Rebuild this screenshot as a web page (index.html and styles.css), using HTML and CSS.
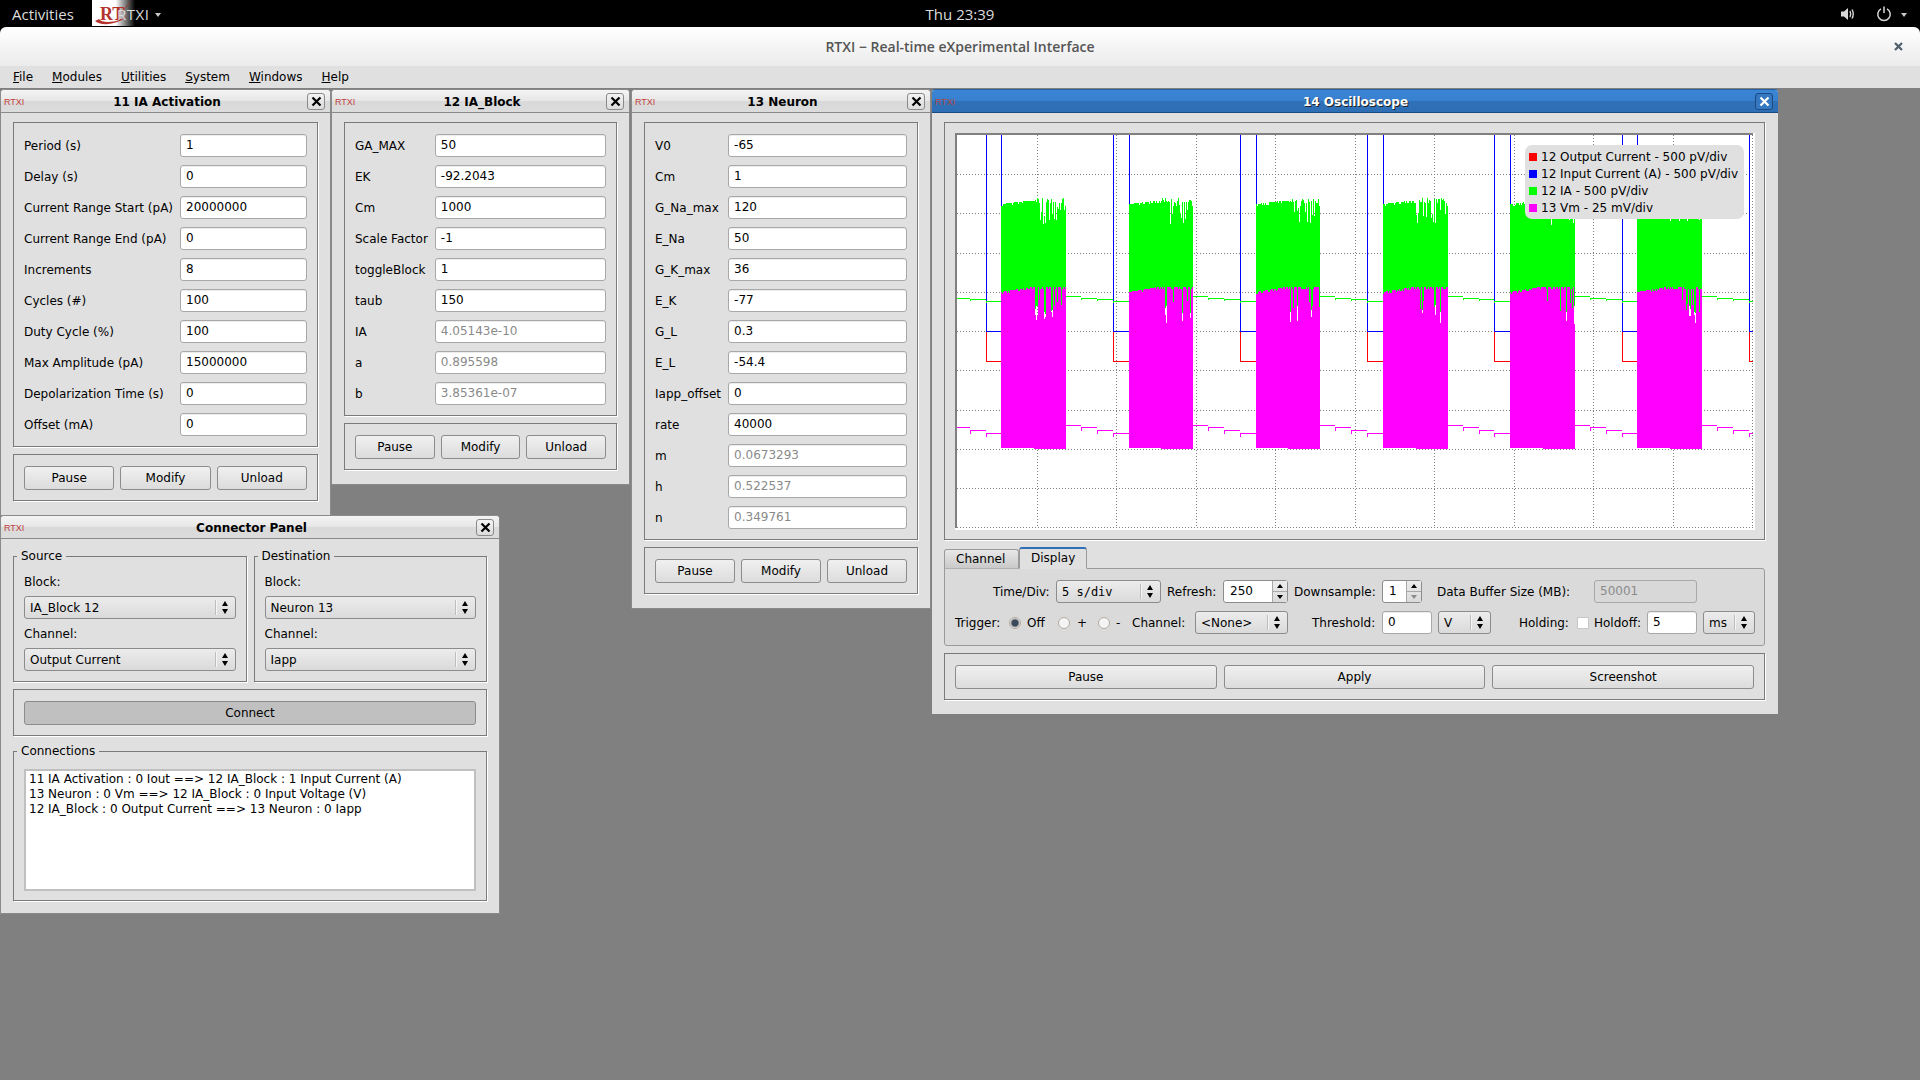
FILE: index.html
```html
<!DOCTYPE html>
<html>
<head>
	<meta charset="utf-8">
	<title>RTXI - Real-time eXperimental Interface</title>
	<link rel="stylesheet" href="styles.css">
</head>
<body>

	<div class="topbar">
		<div class="top-left">
			<span class="activities">Activities</span>
			<div class="app-logo">
				<svg width="43" height="26" viewBox="0 0 43 26">
					<path d="M3 21 C 8 26, 26 26, 38 14 C 28 23, 10 24, 7 19" fill="#b5332e"/>
					<path d="M30 12 L 38 2" stroke="#8c3a30" stroke-width="1" fill="none"/>
					<text x="8" y="20" class="logo-rt">RT</text>
				</svg>
			</div>
			<span class="app-name">RTXI</span>
			<span class="app-arrow"></span>
		</div>
		<div class="clock">Thu 23:39</div>
		<div class="top-right">
			<svg width="16" height="16" viewBox="0 0 16 16">
				<path d="M1 5.5 H4 L8 2 V14 L4 10.500 H1 Z" fill="#d8d8d8"/>
				<path d="M10 5 Q 11.500 8 10 11 M12 3.500 Q 14.500 8 12 12.500" stroke="#d8d8d8" stroke-width="1.400" fill="none"/>
			</svg>
			<svg class="power" width="16" height="16" viewBox="0 0 16 16">
				<path d="M5 2.800 A 6.200 6.200 0 1 0 11 2.800" stroke="#d8d8d8" stroke-width="1.500" fill="none"/>
				<path d="M8 0.500 V7" stroke="#d8d8d8" stroke-width="1.500"/>
			</svg>
			<span class="app-arrow"></span>
		</div>
	</div>

	<div class="title-wrap">
		<div class="titlebar">
			<span></span>
			<span class="title-text">RTXI − Real-time eXperimental Interface</span>
			<svg class="main-close" width="9" height="9" viewBox="0 0 9 9">
				<path d="M1 1 L8 8 M8 1 L1 8" stroke="#4f5f6c" stroke-width="2.200"/>
			</svg>
		</div>
	</div>

	<div class="menubar">
		<span><u>F</u>ile</span>
		<span><u>M</u>odules</span>
		<span><u>U</u>tilities</span>
		<span><u>S</u>ystem</span>
		<span><u>W</u>indows</span>
		<span><u>H</u>elp</span>
	</div>

	<div class="desktop">

		<!-- 11 IA Activation -->
		<div class="win win-activation">
			<div class="win-title">
				<span class="win-icon">RTXI</span>
				<span class="win-name">11 IA Activation</span>
				<span class="win-close"><svg width="11" height="11" viewBox="0 0 11 11"><path d="M1.500 1.500 L9.500 9.500 M9.500 1.500 L1.500 9.500" stroke="#000" stroke-width="2.200"/></svg></span>
			</div>
			<div class="win-body">
				<div class="group form">
					<label>Period (s)</label><div class="field">1</div>
					<label>Delay (s)</label><div class="field">0</div>
					<label>Current Range Start (pA)</label><div class="field">20000000</div>
					<label>Current Range End (pA)</label><div class="field">0</div>
					<label>Increments</label><div class="field">8</div>
					<label>Cycles (#)</label><div class="field">100</div>
					<label>Duty Cycle (%)</label><div class="field">100</div>
					<label>Max Amplitude (pA)</label><div class="field">15000000</div>
					<label>Depolarization Time (s)</label><div class="field">0</div>
					<label>Offset (mA)</label><div class="field">0</div>
				</div>
				<div class="group btn-row">
					<button>Pause</button><button>Modify</button><button>Unload</button>
				</div>
			</div>
		</div>

		<!-- 12 IA_Block -->
		<div class="win win-block">
			<div class="win-title">
				<span class="win-icon">RTXI</span>
				<span class="win-name">12 IA_Block</span>
				<span class="win-close"><svg width="11" height="11" viewBox="0 0 11 11"><path d="M1.500 1.500 L9.500 9.500 M9.500 1.500 L1.500 9.500" stroke="#000" stroke-width="2.200"/></svg></span>
			</div>
			<div class="win-body">
				<div class="group form">
					<label>GA_MAX</label><div class="field">50</div>
					<label>EK</label><div class="field">-92.2043</div>
					<label>Cm</label><div class="field">1000</div>
					<label>Scale Factor</label><div class="field">-1</div>
					<label>toggleBlock</label><div class="field">1</div>
					<label>taub</label><div class="field">150</div>
					<label>IA</label><div class="field readonly">4.05143e-10</div>
					<label>a</label><div class="field readonly">0.895598</div>
					<label>b</label><div class="field readonly">3.85361e-07</div>
				</div>
				<div class="group btn-row">
					<button>Pause</button><button>Modify</button><button>Unload</button>
				</div>
			</div>
		</div>

		<!-- 13 Neuron -->
		<div class="win win-neuron">
			<div class="win-title">
				<span class="win-icon">RTXI</span>
				<span class="win-name">13 Neuron</span>
				<span class="win-close"><svg width="11" height="11" viewBox="0 0 11 11"><path d="M1.500 1.500 L9.500 9.500 M9.500 1.500 L1.500 9.500" stroke="#000" stroke-width="2.200"/></svg></span>
			</div>
			<div class="win-body">
				<div class="group form">
					<label>V0</label><div class="field">-65</div>
					<label>Cm</label><div class="field">1</div>
					<label>G_Na_max</label><div class="field">120</div>
					<label>E_Na</label><div class="field">50</div>
					<label>G_K_max</label><div class="field">36</div>
					<label>E_K</label><div class="field">-77</div>
					<label>G_L</label><div class="field">0.3</div>
					<label>E_L</label><div class="field">-54.4</div>
					<label>Iapp_offset</label><div class="field">0</div>
					<label>rate</label><div class="field">40000</div>
					<label>m</label><div class="field readonly">0.0673293</div>
					<label>h</label><div class="field readonly">0.522537</div>
					<label>n</label><div class="field readonly">0.349761</div>
				</div>
				<div class="group btn-row">
					<button>Pause</button><button>Modify</button><button>Unload</button>
				</div>
			</div>
		</div>

		<!-- Connector Panel -->
		<div class="win win-connector">
			<div class="win-title">
				<span class="win-icon">RTXI</span>
				<span class="win-name">Connector Panel</span>
				<span class="win-close"><svg width="11" height="11" viewBox="0 0 11 11"><path d="M1.500 1.500 L9.500 9.500 M9.500 1.500 L1.500 9.500" stroke="#000" stroke-width="2.200"/></svg></span>
			</div>
			<div class="win-body connector-body">
				<div class="source-dest">
					<fieldset class="fgroup">
						<legend>Source</legend>
						<div class="lb-line">Block:</div>
						<div class="combo"><span>IA_Block 12</span><i class="updown"></i></div>
						<div class="lb-line">Channel:</div>
						<div class="combo"><span>Output Current</span><i class="updown"></i></div>
					</fieldset>
					<fieldset class="fgroup">
						<legend>Destination</legend>
						<div class="lb-line">Block:</div>
						<div class="combo"><span>Neuron 13</span><i class="updown"></i></div>
						<div class="lb-line">Channel:</div>
						<div class="combo"><span>Iapp</span><i class="updown"></i></div>
					</fieldset>
				</div>
				<div class="group btn-row">
					<button class="pressed">Connect</button>
				</div>
				<fieldset class="fgroup conn-group">
					<legend>Connections</legend>
					<div class="conn-list">
						<div>11 IA Activation : 0 Iout ==&gt; 12 IA_Block : 1 Input Current (A)</div>
						<div>13 Neuron : 0 Vm ==&gt; 12 IA_Block : 0 Input Voltage (V)</div>
						<div>12 IA_Block : 0 Output Current ==&gt; 13 Neuron : 0 Iapp</div>
					</div>
				</fieldset>
			</div>
		</div>

		<!-- 14 Oscilloscope -->
		<div class="win win-scope">
			<div class="win-title">
				<span class="win-icon">RTXI</span>
				<span class="win-name">14 Oscilloscope</span>
				<span class="win-close"><svg width="11" height="11" viewBox="0 0 11 11"><path d="M1.500 1.500 L9.500 9.500 M9.500 1.500 L1.500 9.500" stroke="#fff" stroke-width="2.200"/></svg></span>
			</div>
			<div class="win-body">
				<div class="group plot-group">
					<div class="plot">
						<canvas id="scope" width="800" height="397"></canvas>
						<div class="plot-legend">
							<div><i class="sw-red"></i>12 Output Current - 500 pV/div</div>
							<div><i class="sw-blue"></i>12 Input Current (A) - 500 pV/div</div>
							<div><i class="sw-green"></i>12 IA - 500 pV/div</div>
							<div><i class="sw-magenta"></i>13 Vm - 25 mV/div</div>
						</div>
					</div>
				</div>

				<div class="tabs-wrap">
					<div class="tabs">
						<div class="tab">Channel</div>
						<div class="tab active">Display</div>
					</div>
					<div class="tab-pane">
						<div class="ctl-row">
							<span class="lb ml38 w56">Time/Div:</span>
							<div class="combo mono ml7 w105"><span>5 s/div</span><i class="updown"></i></div>
							<span class="lb ml6 w49">Refresh:</span>
							<div class="spin ml7 w65"><span class="spin-val">250</span><span class="spin-btns"><i class="arrow-up"></i><i class="arrow-down"></i></span></div>
							<span class="lb ml6 w81">Downsample:</span>
							<div class="spin ml7 w40"><span class="spin-val">1</span><span class="spin-btns"><i class="arrow-up"></i><i class="arrow-down dim"></i></span></div>
							<span class="lb ml15 w131">Data Buffer Size (MB):</span>
							<div class="field disabled ml26 w103">50001</div>
						</div>
						<div class="ctl-row">
							<span class="lb w45">Trigger:</span>
							<i class="radio checked ml9"></i>
							<span class="lb ml6 w18">Off</span>
							<i class="radio ml13"></i>
							<span class="lb ml7 w8">+</span>
							<i class="radio ml13"></i>
							<span class="lb ml6 w4">-</span>
							<span class="lb ml12 w53">Channel:</span>
							<div class="combo ml10 w93"><span>&lt;None&gt;</span><i class="updown"></i></div>
							<span class="lb ml24 w63">Threshold:</span>
							<div class="field ml7 w50">0</div>
							<div class="combo ml6 w53"><span>V</span><i class="updown"></i></div>
							<span class="lb ml28 w49">Holding:</span>
							<i class="check ml9"></i>
							<span class="lb ml5 w46">Holdoff:</span>
							<div class="field ml7 w50">5</div>
							<div class="combo ml6 w52"><span>ms</span><i class="updown"></i></div>
						</div>
					</div>
				</div>

				<div class="group btn-row scope-btns">
					<button>Pause</button><button>Apply</button><button>Screenshot</button>
				</div>
			</div>
		</div>

	</div>

	<script src="plot.js"></script>
</body>
</html>
```

FILE: styles.css
```css
* {
	box-sizing: border-box;
}

html, body {
	margin: 0;
	height: 100%;
}

body {
	display: flex;
	flex-direction: column;
	width: 1920px;
	height: 1080px;
	overflow: hidden;
	background: #808080;
	font-family: "DejaVu Sans", sans-serif;
	font-size: 12px;
	color: #000;
}

/* gnome shell bar */

.topbar {
	display: grid;
	grid-template-columns: 1fr auto 1fr;
	align-items: center;
	height: 27px;
	flex: none;
	background: #000;
	color: #dcdcdc;
	font-family: "Open Sans", sans-serif;
	font-size: 15px;
}

.top-left {
	display: flex;
	align-items: center;
	height: 27px;
}

.activities {
	margin-left: 12px;
	width: 80px;
}

.app-logo {
	width: 43px;
	height: 26px;
	align-self: flex-start;
	background: linear-gradient(90deg, #fff 55%, #000 100%);
}

.logo-rt {
	font-family: "Liberation Serif", serif;
	font-weight: bold;
	font-size: 18px;
	fill: #b5332e;
}

.app-name {
	margin-left: -18px;
	letter-spacing: 0.500px;
	position: relative;
}

.app-arrow {
	width: 0;
	height: 0;
	margin-left: 6px;
	margin-top: 3px;
	border-left: 3.500px solid transparent;
	border-right: 3.500px solid transparent;
	border-top: 4px solid #c8c8c8;
}

.top-right {
	display: flex;
	align-items: center;
	justify-content: flex-end;
	padding-right: 13px;
}

.top-right .power {
	margin-left: 20px;
}

.top-right .app-arrow {
	margin-left: 9px;
}

/* main window */

.title-wrap {
	flex: none;
	background: #000;
}

.titlebar {
	display: grid;
	grid-template-columns: 1fr auto 1fr;
	align-items: center;
	height: 39px;
	border-radius: 6px 6px 0 0;
	background: linear-gradient(#fff, #ebebeb);
	color: #555;
	font-family: "Open Sans", sans-serif;
	font-size: 14px;
	font-weight: 600;
}

.main-close {
	justify-self: end;
	margin-right: 17px;
}

.menubar {
	display: flex;
	flex: none;
	gap: 19px;
	align-items: center;
	height: 22px;
	padding-left: 13px;
	background: #e0e0e0;
}

.desktop {
	position: relative;
	flex: 1;
	background: #808080;
}

/* module windows */

.win {
	position: absolute;
	top: 1px;
	background: #e0e0e0;
	border: 1px solid #8a8a8a;
	border-radius: 4px 4px 0 0;
}

.win-activation {
	left: 0;
	width: 331px;
}

.win-block {
	left: 331px;
	width: 299px;
}

.win-neuron {
	left: 631px;
	width: 300px;
}

.win-connector {
	left: 0;
	top: 427px;
	width: 500px;
}

.win-scope {
	left: 931px;
	width: 848px;
	border-color: #808080;
	border-top-color: #2a5f9e;
}

.win-title {
	display: grid;
	grid-template-columns: 1fr auto 1fr;
	align-items: center;
	height: 23px;
	padding: 1px 5px 0 8px;
	background: linear-gradient(#f4f4f4, #e6e6e6 50%, #d9d9d9 52%, #dcdcdc);
	border-bottom: 1px solid #8a8a8a;
	border-radius: 3px 3px 0 0;
}

.win-icon {
	margin-left: -5px;
	font-family: "Liberation Sans", sans-serif;
	font-size: 9px;
	color: #c0403a;
}

.win-name {
	font-weight: bold;
}

.win-close {
	display: flex;
	align-items: center;
	justify-content: center;
	justify-self: end;
	width: 18px;
	height: 17px;
	margin-top: -1px;
	border: 1px solid #8a8a8a;
	border-radius: 3px;
	background: linear-gradient(#f2f2f2, #dcdcdc);
}

.win-scope .win-title {
	background: linear-gradient(#3b85d6, #3680cf 50%, #2f71b8 52%, #2e6eb4);
	border-bottom-color: #1c4a80;
}

.win-scope .win-name {
	margin-left: -2px;
	color: #fff;
	text-shadow: 1px 1px 0 #222;
}

.win-scope .win-icon {
	color: #b5433c;
}

.win-scope .win-close {
	border-color: #1c4a80;
	background: #3478c2;
}

.win-scope .win-body {
	padding-right: 13px;
}

.win-body {
	display: flex;
	flex-direction: column;
	gap: 7px;
	padding: 9px 12px 14px 12px;
}

.group {
	border: 1px solid #7a7a7a;
	box-shadow: 1px 1px 0 #fff;
}

.form {
	display: grid;
	grid-template-columns: auto 1fr;
	column-gap: 7px;
	row-gap: 8px;
	align-items: center;
	padding: 11px 10px 10px 10px;
}

.form label {
	white-space: nowrap;
}

.field {
	height: 23px;
	line-height: 21px;
	padding-left: 5px;
	background: #fff;
	border: 1px solid #a8a8a8;
	border-radius: 3px;
	box-shadow: inset 0 1px 0 #ececec;
}

.field.readonly {
	color: #8a8a8a;
}

.field.disabled {
	background: #d8d8d8;
	color: #8a8a8a;
	box-shadow: none;
}

.btn-row {
	display: flex;
	gap: 6px;
	padding: 11px 10px 10px 10px;
}

.btn-row button {
	flex: 1;
	height: 24px;
	padding: 0;
	font-family: inherit;
	font-size: 12px;
	color: #000;
	background: linear-gradient(#f0f0f0, #dcdcdc);
	border: 1px solid #8c8c8c;
	border-radius: 3px;
}

.btn-row button.pressed {
	background: #c0c0c0;
}

.scope-btns {
	gap: 7px;
}

/* connector panel */

.connector-body {
	padding-bottom: 12px;
}

.source-dest {
	display: grid;
	grid-template-columns: 1fr 1fr;
	gap: 7px;
}

.fgroup {
	display: flex;
	flex-direction: column;
	gap: 7px;
	min-width: 0;
	margin: 0;
	padding: 11px 10px 10px 10px;
	border: 1px solid #7a7a7a;
	box-shadow: 1px 1px 0 #fff;
}

.fgroup legend {
	margin-left: -7px;
	margin-bottom: -1px;
	padding: 1px 4px 0 4px;
	line-height: 15px;
}

.conn-group {
	padding-bottom: 9px;
}

.lb-line {
	height: 15px;
	line-height: 17px;
}

.combo {
	display: flex;
	align-items: center;
	justify-content: space-between;
	height: 23px;
	padding-left: 5px;
	background: linear-gradient(#ececec, #dadada);
	border: 1px solid #8c8c8c;
	border-radius: 3px;
}

.combo.mono {
	font-family: "DejaVu Sans Mono", monospace;
}

.updown {
	position: relative;
	flex: none;
	width: 20px;
	height: 15px;
	border-left: 1px solid #bdbdbd;
	box-shadow: inset 1px 0 0 #f5f5f5;
}

.updown::before, .updown::after {
	content: "";
	position: absolute;
	left: 6px;
	border-left: 3.500px solid transparent;
	border-right: 3.500px solid transparent;
}

.updown::before {
	top: 1px;
	border-bottom: 5px solid #000;
}

.updown::after {
	bottom: 1px;
	border-top: 5px solid #000;
}

.conn-list {
	height: 122px;
	padding: 1px 3px 0 3px;
	line-height: 15px;
	background: #fff;
	border: 2px solid #c0c0c0;
}

/* oscilloscope */

.plot-group {
	padding: 10px 9px 9px 10px;
}

.plot {
	position: relative;
	width: 800px;
	height: 397px;
}

.plot canvas {
	display: block;
}

.plot-legend {
	position: absolute;
	left: 570px;
	top: 12px;
	width: 219px;
	height: 74px;
	padding: 4px 0 0 4px;
	background: #e0e0e0;
	border-radius: 7px;
	line-height: 17px;
	white-space: nowrap;
}

.plot-legend i {
	display: inline-block;
	width: 8px;
	height: 8px;
	margin-right: 4px;
}

.sw-red { background: #f00; }
.sw-blue { background: #00f; }
.sw-green { background: #0f0; }
.sw-magenta { background: #f0f; }

.tabs {
	display: flex;
	align-items: flex-end;
	height: 22px;
	margin-bottom: -1px;
	position: relative;
	z-index: 1;
}

.tab {
	width: 75px;
	height: 20px;
	padding-left: 11px;
	line-height: 19px;
	background: linear-gradient(#e8e8e8, #c9c9c9);
	border: 1px solid #9a9a9a;
	border-bottom: 1px solid #b0b0b0;
	border-radius: 3px 3px 0 0;
}

.tab.active {
	width: 68px;
	height: 22px;
	margin-left: 0;
	padding-top: 0;
	line-height: 19px;
	background: #e0e0e0;
	border-top: 2px solid #2f6fb5;
	border-bottom-color: #e0e0e0;
}

.tab-pane {
	display: flex;
	flex-direction: column;
	gap: 8px;
	height: 78px;
	padding: 11px 9px 0 10px;
	background: #dadada;
	border: 1px solid #9a9a9a;
	border-radius: 0 3px 3px 3px;
}

.ctl-row {
	display: flex;
	align-items: center;
	height: 23px;
}

.ctl-row > * {
	flex: none;
}

.lb {
	white-space: nowrap;
}

.spin {
	display: flex;
	height: 23px;
	background: #fff;
	border: 1px solid #8c8c8c;
	border-radius: 3px;
}

.spin-val {
	flex: 1;
	padding-left: 6px;
	line-height: 21px;
}

.spin-btns {
	display: flex;
	flex-direction: column;
	flex: none;
	width: 15px;
	border-left: 1px solid #a8a8a8;
	background: linear-gradient(#ececec, #dadada);
}

.spin-btns i {
	display: flex;
	flex: 1;
	align-items: center;
	justify-content: center;
}

.arrow-up {
	border-bottom: 1px solid #a8a8a8;
}

.arrow-up::before, .arrow-down::before {
	content: "";
	border-left: 3.500px solid transparent;
	border-right: 3.500px solid transparent;
}

.arrow-up::before {
	border-bottom: 4px solid #000;
}

.arrow-down::before {
	border-top: 4px solid #000;
}

.arrow-down.dim::before {
	border-top-color: #8a8a8a;
}

.radio {
	display: block;
	width: 12px;
	height: 12px;
	border-radius: 50%;
	border: 1px solid #b3aaa0;
	background: #f4f4f4;
}

.radio.checked {
	background: radial-gradient(circle, #3a4a5a 0 3px, #a8a8a8 4px, #e8e8e8 5px);
}

.check {
	display: block;
	width: 12px;
	height: 12px;
	background: #fff;
	border: 1px solid #c8c8c8;
}

.ml5 { margin-left: 5px; }
.ml6 { margin-left: 6px; }
.ml7 { margin-left: 7px; }
.ml9 { margin-left: 9px; }
.ml10 { margin-left: 10px; }
.ml12 { margin-left: 12px; }
.ml13 { margin-left: 13px; }
.ml15 { margin-left: 15px; }
.ml24 { margin-left: 24px; }
.ml26 { margin-left: 26px; }
.ml28 { margin-left: 28px; }
.ml38 { margin-left: 38px; }

.w4 { width: 4px; }
.w8 { width: 8px; }
.w18 { width: 18px; }
.w40 { width: 40px; }
.w45 { width: 45px; }
.w46 { width: 46px; }
.w49 { width: 49px; }
.w50 { width: 50px; }
.w52 { width: 52px; }
.w53 { width: 53px; }
.w56 { width: 56px; }
.w63 { width: 63px; }
.w65 { width: 65px; }
.w81 { width: 81px; }
.w93 { width: 93px; }
.w103 { width: 103px; }
.w105 { width: 105px; }
.w131 { width: 131px; }
```

FILE: plot.js
```js
var c = document.querySelector("#scope");
var ctx = c.getContext("2d");

// all coordinates below are page pixels
ctx.translate(-955, -133);

var gridX = [1037, 1116, 1196, 1275, 1355, 1434, 1514, 1593, 1673, 1752];
var gridY = [174, 213, 253, 292, 331, 370, 410, 449, 488, 527];

// down: blue falls, up: blue rises and the burst starts, end: burst stops
var pulses = [
	{ down: 986, up: 1001, end: 1066 },
	{ down: 1113, up: 1129, end: 1193 },
	{ down: 1240, up: 1256, end: 1320 },
	{ down: 1367, up: 1383, end: 1448 },
	{ down: 1494, up: 1510, end: 1575 },
	{ down: 1622, up: 1637, end: 1702 }
];

var seed = 7;
function rand() {
	seed = (seed * 16807) % 2147483647;
	return seed / 2147483647;
}

function rect(color, x0, y0, x1, y1) {
	ctx.fillStyle = color;
	ctx.fillRect(x0, y0, x1 - x0, y1 - y0);
}

function drawGrid() {
	ctx.fillStyle = "#fff";
	ctx.fillRect(955, 133, 800, 397);

	ctx.strokeStyle = "#808080";
	ctx.lineWidth = 1;
	ctx.setLineDash([1, 2]);
	ctx.beginPath();
	for (var i = 0; i < gridX.length; i++) {
		ctx.moveTo(gridX[i] + 0.5, 135);
		ctx.lineTo(gridX[i] + 0.5, 528);
	}
	for (var j = 0; j < gridY.length; j++) {
		ctx.moveTo(957, gridY[j] + 0.5);
		ctx.lineTo(1753, gridY[j] + 0.5);
	}
	ctx.stroke();
	ctx.setLineDash([]);

	rect("#808080", 955, 133, 1753, 135);
	rect("#808080", 955, 133, 957, 528);
}

// the step-down baseline between two bursts
function drawBaseline(color, levels, tick, end, down, up) {
	var xs = [end, end + 15, end + 31, down, up];
	for (var i = 0; i < 4; i++) {
		var x0 = Math.max(xs[i], 957);
		var x1 = Math.min(xs[i + 1], 1753);
		if (x1 <= x0) continue;
		rect(color, x0, levels[i], x1, levels[i] + 1);
		if (i > 0 && xs[i] >= 957) rect(color, xs[i], levels[i], xs[i] + 1, levels[i] + tick);
	}
}

function drawBlueRed(down, up) {
	rect("#f00", down, 331, down + 1, 362);
	rect("#f00", down, 361, Math.min(up, 1753), 362);
	rect("#00f", down, 135, down + 1, 332);
	rect("#00f", down, 331, Math.min(up, 1753), 332);
	if (up < 1753) rect("#00f", up, 135, up + 1, 332);
}

function drawBurst(p) {
	var w = p.end - p.up;
	var mag = [];
	for (var i = 0; i < w; i++) {
		var f = i / w;
		var gTop = 204 - 3.5 * Math.min(f / 0.45, 1) + (rand() < 0.3 ? 2 : 0);
		var gBot = 318;
		var mTop = 292 - 5 * Math.min(f / 0.45, 1) + (rand() < 0.3 ? 2 : 0);
		var mBot = f < 0.5 ? 448 : 449;
		if (f > 0.5) {
			gTop = 198 + rand() * 5;
			if (rand() < 0.35) gTop = 205 + rand() * 20;
			if (rand() < 0.3) {
				mTop = 300 + rand() * 25;
				gBot = 305 + rand() * 10;
			}
		}
		if (f > 0.97) gTop = 206;
		rect("#0f0", p.up + i, Math.round(gTop), p.up + i + 1, Math.round(gBot));
		mag.push([Math.round(mTop), mBot]);
	}
	for (var k = 0; k < w; k++) {
		rect("#f0f", p.up + k, mag[k][0], p.up + k + 1, mag[k][1]);
	}
}

function drawScope() {
	var green = [296, 298, 299, 301];
	var magenta = [425, 427, 430, 433];

	drawGrid();

	var i, p, prevEnd;
	prevEnd = 939;
	for (i = 0; i < pulses.length; i++) {
		p = pulses[i];
		drawBlueRed(p.down, p.up);
		drawBaseline("#0f0", green, 2, prevEnd, p.down, p.up);
		prevEnd = p.end;
	}
	drawBlueRed(1749, 1753);
	drawBaseline("#0f0", green, 2, prevEnd, 1749, 1753);

	prevEnd = 939;
	for (i = 0; i < pulses.length; i++) {
		p = pulses[i];
		drawBaseline("#f0f", magenta, 4, prevEnd, p.down, p.up);
		drawBurst(p);
		prevEnd = p.end;
	}
	drawBaseline("#f0f", magenta, 4, prevEnd, 1749, 1753);
}

drawScope();
```
